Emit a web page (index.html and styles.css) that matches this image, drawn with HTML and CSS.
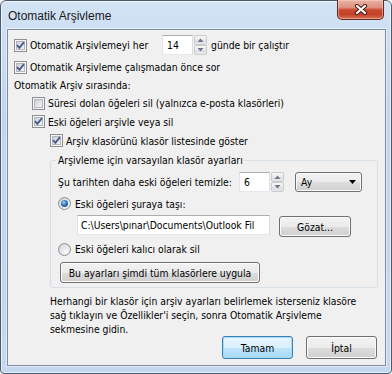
FILE: index.html
```html
<!DOCTYPE html>
<html lang="tr">
<head>
    <meta charset="UTF-8">
    <meta name="viewport" content="width=device-width, initial-scale=1.0">
    <title>Otomatik Arşivleme</title>
    <link rel="stylesheet" href="styles.css">
</head>
<body>
    <div class="window">
        <div class="titlebar">
            <span class="title">Otomatik Arşivleme</span>
            <div class="close-button">
                <svg width="14" height="11" viewBox="0 0 14 11">
                    <path d="M3 2 L11 9 M11 2 L3 9" stroke="#4b1a14" stroke-width="4.2" stroke-linecap="round"/>
                    <path d="M3 2 L11 9 M11 2 L3 9" stroke="#fff" stroke-width="2.2" stroke-linecap="round"/>
                </svg>
            </div>
        </div>

        <div class="client">
            <div class="row row-first indent-0">
                <span class="check"><svg width="11" height="11" viewBox="0 0 11 11"><path d="M2 5.2 L4.4 7.8 L9 2.2"/></svg></span>
                <span class="label label-every">Otomatik Arşivlemeyi her</span>
                <span class="field field-small">14</span>
                <span class="spin">
                    <span class="spin-btn"><svg width="7" height="4" viewBox="0 0 7 4"><path d="M0.5 4 L3.5 0.5 L6.5 4Z"/></svg></span>
                    <span class="spin-btn"><svg width="7" height="4" viewBox="0 0 7 4"><path d="M0.5 0 L3.5 3.5 L6.5 0Z"/></svg></span>
                </span>
                <span class="label after-spin">günde bir çalıştır</span>
            </div>
            <div class="row row-second indent-0">
                <span class="check"><svg width="11" height="11" viewBox="0 0 11 11"><path d="M2 5.2 L4.4 7.8 L9 2.2"/></svg></span>
                <span class="label">Otomatik Arşivleme çalışmadan önce sor</span>
            </div>
            <div class="row indent-0">
                <span class="label">Otomatik Arşiv sırasında:</span>
            </div>
            <div class="row indent-1">
                <span class="check"></span>
                <span class="label">Süresi dolan öğeleri sil (yalnızca e-posta klasörleri)</span>
            </div>
            <div class="row row-tall indent-1">
                <span class="check"><svg width="11" height="11" viewBox="0 0 11 11"><path d="M2 5.2 L4.4 7.8 L9 2.2"/></svg></span>
                <span class="label">Eski öğeleri arşivle veya sil</span>
            </div>
            <div class="row row-tall indent-2">
                <span class="check"><svg width="11" height="11" viewBox="0 0 11 11"><path d="M2 5.2 L4.4 7.8 L9 2.2"/></svg></span>
                <span class="label">Arşiv klasörünü klasör listesinde göster</span>
            </div>

            <fieldset class="group">
                <legend>Arşivleme için varsayılan klasör ayarları</legend>

                <div class="row row-age">
                    <span class="label label-age">Şu tarihten daha eski öğeleri temizle:</span>
                    <span class="field field-small">6</span>
                    <span class="spin">
                        <span class="spin-btn"><svg width="7" height="4" viewBox="0 0 7 4"><path d="M0.5 4 L3.5 0.5 L6.5 4Z"/></svg></span>
                        <span class="spin-btn"><svg width="7" height="4" viewBox="0 0 7 4"><path d="M0.5 0 L3.5 3.5 L6.5 0Z"/></svg></span>
                    </span>
                    <span class="combo">
                        <span>Ay</span>
                        <svg width="7" height="4" viewBox="0 0 7 4"><path d="M0 0 L7 0 L3.5 4Z"/></svg>
                    </span>
                </div>
                <div class="row row-radio">
                    <span class="radio"><span class="radio-dot"></span></span>
                    <span class="label">Eski öğeleri şuraya taşı:</span>
                </div>
                <div class="row row-path">
                    <span class="field field-path">C:\Users\pınar\Documents\Outlook Fil</span>
                    <span class="button button-browse">Gözat...</span>
                </div>
                <div class="row row-radio-2">
                    <span class="radio"></span>
                    <span class="label">Eski öğeleri kalıcı olarak sil</span>
                </div>
                <div class="row row-apply">
                    <span class="button button-apply">Bu ayarları şimdi tüm klasörlere uygula</span>
                </div>
            </fieldset>

            <p class="hint">Herhangi bir klasör için arşiv ayarları belirlemek isterseniz klasöre<br>sağ tıklayın ve Özellikler'i seçin, sonra Otomatik Arşivleme<br>sekmesine gidin.</p>

            <div class="actions">
                <span class="button button-default">Tamam</span>
                <span class="button">İptal</span>
            </div>
        </div>
    </div>
</body>
</html>
```

FILE: styles.css
```css
body {
    margin: 0;
    background: #fff;
}

.window {
    width: 392px;
    height: 374px;
    box-sizing: border-box;
    display: flex;
    flex-direction: column;
    border: 1px solid #4a5a6c;
    border-radius: 6px 6px 4px 4px;
    background: linear-gradient(#d3e3f5, #c0d5ee 30%, #c4d8ef);
    box-shadow: inset 0 0 0 1px rgba(255, 255, 255, 0.6);
    font: 10.3px "DejaVu Sans Condensed", "Liberation Sans", sans-serif;
    color: #000;
}

.titlebar {
    height: 28px;
    display: flex;
    align-items: flex-start;
    justify-content: space-between;
    padding-left: 7px;
}

.title {
    margin-top: 7px;
    font: 12px "Liberation Sans", sans-serif;
    line-height: 16px;
    color: #1a1a1a;
}

.close-button {
    width: 47px;
    height: 20px;
    margin-top: -1px;
    margin-right: 7px;
    box-sizing: border-box;
    display: flex;
    align-items: center;
    justify-content: center;
    border: 1px solid #5e2a24;
    border-top: none;
    border-radius: 0 0 5px 5px;
    background: linear-gradient(#eab3a6 0%, #de8f7e 40%, #c94a30 52%, #c2412a 75%, #d9714f 100%);
    box-shadow: inset 0 0 0 1px rgba(255, 220, 210, 0.45);
}

.client {
    flex: 1;
    margin: 0 5px 7px 6px;
    padding-top: 5px;
    display: flex;
    flex-direction: column;
    border: 1px solid #7b8ca3;
    background: #f0f0f0;
    box-shadow: 0 0 0 1px rgba(255, 255, 255, 0.5);
}

/* rows */
.row {
    display: flex;
    align-items: center;
    height: 18px;
    white-space: nowrap;
}

.row-first { height: 20px; }
.row-second { margin-top: 3px; }
.row-tall { height: 19px; }

.indent-0 { padding-left: 6px; }
.indent-1 { padding-left: 24px; }
.indent-2 { padding-left: 42px; }

.label-every { width: 132px; }
.after-spin { margin-left: 4px; }

/* checkbox */
.check {
    width: 13px;
    height: 13px;
    box-sizing: border-box;
    flex: none;
    margin-right: 3px;
    border: 1px solid #8e8f8f;
    background: linear-gradient(135deg, #c0c4cb 0%, #e4e6e9 55%, #fbfbfb 100%);
    box-shadow: inset 0 0 0 1px #f6f6f6, inset 0 0 0 2px #b4b8be;
}

.check svg {
    display: block;
}

.check path {
    fill: none;
    stroke: #4a5b8a;
    stroke-width: 1.9;
}

/* radio */
.radio {
    width: 13px;
    height: 13px;
    box-sizing: border-box;
    flex: none;
    margin-right: 4px;
    display: flex;
    align-items: center;
    justify-content: center;
    border: 1px solid #8e8f8f;
    border-radius: 50%;
    background: radial-gradient(circle at 65% 70%, #fcfcfc 0%, #e6e7ea 45%, #c7cbd1 100%);
}

.radio-dot {
    width: 7px;
    height: 7px;
    border-radius: 50%;
    background: radial-gradient(circle at 40% 35%, #a6d3f3 0%, #2f73b8 45%, #163f70 100%);
}

/* fields */
.field {
    height: 20px;
    box-sizing: border-box;
    display: flex;
    align-items: center;
    border: 1px solid;
    border-color: #abadb3 #dbdfe6 #e3e9ef #e2e3ea;
    background: #fff;
    overflow: hidden;
}

.field-small {
    width: 31px;
    padding-left: 4px;
}

.field-path {
    width: 193px;
    margin-left: 21px;
    padding-left: 3px;
}

.spin {
    width: 13px;
    height: 20px;
    margin-left: 1px;
    display: flex;
    flex-direction: column;
}

.spin-btn {
    flex: 1;
    display: flex;
    align-items: center;
    justify-content: center;
    border: 1px solid #c9cbcf;
    border-radius: 2px;
    background: linear-gradient(#f7f7f7, #e9e9ea 50%, #dedfe1 51%, #e6e7e9);
}

.spin-btn svg {
    display: block;
}

.spin-btn path {
    fill: #6b7890;
}

.combo {
    width: 67px;
    height: 20px;
    margin-left: 11px;
    box-sizing: border-box;
    display: flex;
    align-items: center;
    justify-content: space-between;
    padding: 0 5px;
    border: 1px solid #707070;
    border-radius: 3px;
    background: linear-gradient(#f2f2f2 0%, #ebebeb 50%, #dddddd 51%, #cfcfcf 100%);
    box-shadow: inset 0 0 0 1px #fbfbfb;
}

.combo svg {
    display: block;
}

/* group box */
.group {
    margin: 3px 7px 0 42px;
    padding: 0 0 4px 5px;
    border: 1px solid #d5dfe5;
    border-radius: 3px;
    min-width: 0;
}

.group legend {
    padding: 0 2px;
    line-height: 14px;
}

.row-age {
    height: 20px;
    margin-top: 5px;
    padding-left: 2px;
}

.label-age { width: 181px; }

.row-radio {
    height: 19px;
    margin-top: 2px;
    padding-left: 2px;
}

.row-path {
    height: 22px;
    margin-top: 2px;
    align-items: flex-start;
}

.row-radio-2 {
    margin-top: 3px;
    padding-left: 2px;
}

.row-apply {
    height: 21px;
    margin-top: 4px;
}

/* buttons */
.button {
    height: 23px;
    width: 71px;
    box-sizing: border-box;
    display: flex;
    align-items: center;
    justify-content: center;
    border: 1px solid #707070;
    border-radius: 3px;
    background: linear-gradient(#f2f2f2 0%, #ebebeb 50%, #dddddd 51%, #cfcfcf 100%);
    box-shadow: inset 0 0 0 1px #fbfbfb;
}

.button-browse {
    width: 72px;
    height: 21px;
    margin: 1px 0 0 9px;
}

.button-apply {
    width: 200px;
    height: 21px;
    margin-left: 4px;
}

.button-default {
    border-color: #3c7fb1;
    background: linear-gradient(#eaf6fd 0%, #d9f0fc 50%, #bee6fd 51%, #a7d9f5 100%);
    box-shadow: inset 0 0 0 1px #a2dcf7;
}

.hint {
    margin: 6px 0 0 42px;
    line-height: 14px;
    white-space: nowrap;
}

.actions {
    display: flex;
    justify-content: flex-end;
    gap: 13px;
    padding-right: 8px;
}
```
